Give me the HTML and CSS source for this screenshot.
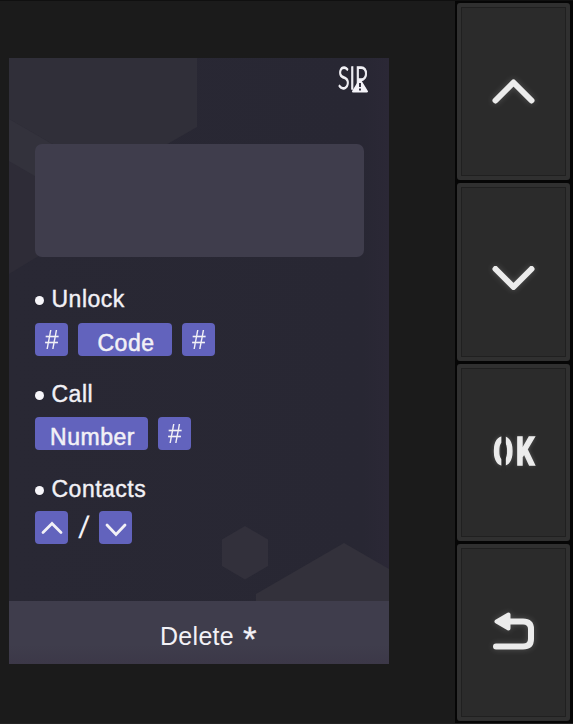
FILE: index.html
```
<!DOCTYPE html>
<html lang="en">
<head>
  <meta charset="UTF-8">
  <title>Door Station</title>
  <meta name="viewport" content="width=device-width, initial-scale=1.0">
  <link rel="stylesheet" href="styles.css">
</head>
<body>
  <div class="device">
    <div class="panel">
      <div class="screen">
        <!-- background hexagons -->
        <svg class="backdrop" viewBox="0 0 380 606" aria-hidden="true">
          <path fill="#2e2c37" d="M0 61 L80 70 L100 150 L28 199 L0 216Z"/>
          <path fill="#302f39" d="M0 0H188V69L101 119L0 61Z"/>
          <path fill="#33323c" d="M0 61L50 90V132L0 103Z"/>
          <path fill="#32303b" d="M236 468L259 481.500V508L236 521.500L213 508V481.500Z"/>
          <path fill="#33313b" d="M335 485L380 511V544H247V536Z"/>
        </svg>
        <div class="status-bar">
          <span class="sip">SIP</span>
          <svg class="warning" viewBox="0 0 18 15">
            <path fill="#f4f3f8" stroke="#f4f3f8" stroke-width="2" stroke-linejoin="round" d="M9 2L16 13.500H2Z"/>
            <path stroke="#343240" stroke-width="2" d="M9 5V9M9 10.500V12.500"/>
          </svg>
        </div>
        <div class="display"></div>
        <div class="help">
          <div class="title">Unlock</div>
          <div class="keys">
            <span class="key hash"><span>#</span></span>
            <span class="key code">Code</span>
            <span class="key hash"><span>#</span></span>
          </div>
          <div class="title">Call</div>
          <div class="keys">
            <span class="key number">Number</span>
            <span class="key hash"><span>#</span></span>
          </div>
          <div class="title">Contacts</div>
          <div class="keys">
            <span class="key"><svg viewBox="0 0 32 32"><path d="M7 20.500L16 11.500L25 20.500"/></svg></span>
            <span class="slash">/</span>
            <span class="key"><svg viewBox="0 0 32 32"><path d="M7 13L16 22.500L25 13"/></svg></span>
          </div>
        </div>
        <div class="footer"><span>Delete</span><span class="star">*</span></div>
      </div>
    </div>
    <div class="buttons">
      <button class="button" aria-label="Up">
        <svg viewBox="0 0 50 50"><path d="M6.500 33.500L24.500 15.500L42.500 33.500"/></svg>
      </button>
      <button class="button" aria-label="Down">
        <svg viewBox="0 0 50 50"><path d="M6.500 22L24.500 40L42.500 22"/></svg>
      </button>
      <button class="button">
        <span class="ok"><span class="ok-o">O</span><span>K</span></span>
      </button>
      <button class="button" aria-label="Back">
        <svg viewBox="0 0 50 50">
          <path d="M18 14.500H34Q42 14.500 42 22V32Q42 39.500 34 39.500H7"/>
          <path class="head" d="M7.500 14.500L19.500 7.500V21.500Z"/>
        </svg>
      </button>
    </div>
  </div>
</body>
</html>
```

FILE: styles.css
```
* {
  box-sizing: border-box;
}
body {
  margin: 0;
  background: #1b1b1b;
  font-family: "Liberation Sans", Arial, sans-serif;
}
.device {
  display: flex;
  width: 573px;
  height: 724px;
  overflow: hidden;
  border-top: 1px solid #101010;
  border-bottom: 1px solid #222;
}
.panel {
  width: 455px;
  padding: 57px 0 0 9px;
}

/* screen */
.screen {
  position: relative;
  display: flex;
  flex-direction: column;
  width: 380px;
  height: 606px;
  background: linear-gradient(90deg, #292834, #282733 93%, #2b2836);
  color: #f2f1f6;
}
.backdrop {
  position: absolute;
  inset: 0;
  width: 380px;
  height: 606px;
}
.status-bar {
  position: relative;
  height: 86px;
}
.sip {
  position: absolute;
  top: 1px;
  left: 329px;
  font-family: Lato, sans-serif;
  font-size: 32px;
  font-weight: 300;
  line-height: 36px;
  letter-spacing: 0;
  transform: scaleX(.67);
  transform-origin: left;
  -webkit-text-stroke: 1.3px #f2f1f6;
}
.warning {
  position: absolute;
  top: 20px;
  left: 342px;
  width: 18px;
  height: 15px;
}
.display {
  position: relative;
  height: 113px;
  margin: 0 25px 0 26px;
  border-radius: 7px;
  background: #3f3d4c;
}
.help {
  position: relative;
  display: grid;
  grid-template-rows: 39px 56px 38px 57px 37px 32px;
  padding: 27px 26px 0;
}
.title {
  display: flex;
  align-items: center;
  height: 31px;
  font-size: 23px;
  letter-spacing: .5px;
  -webkit-text-stroke: .4px #f2f1f6;
}
.title::before {
  content: "";
  width: 9px;
  height: 9px;
  margin: 2px 7.5px 0 0;
  border-radius: 50%;
  background: #f7f6fa;
}
.keys {
  display: flex;
  gap: 11px;
  height: 32px;
}
.key {
  display: flex;
  align-items: center;
  justify-content: center;
  width: 33px;
  height: 33px;
  border-radius: 4px;
  background: #6263bd;
  font-size: 23px;
  line-height: 32px;
}
.keys .key + .key,
.slash + .key {
  margin-left: -1px;
}
.key svg {
  width: 32px;
  height: 32px;
  fill: none;
  stroke: #f2f1f6;
  stroke-width: 2.8;
  stroke-linecap: round;
}
.hash {
  font-size: 28px;
}
.hash span {
  transform: scaleX(.88);
}
.keys .code,
.number {
  padding: 7px 0 0 2px;
  letter-spacing: .5px;
  -webkit-text-stroke: .5px #f2f1f6;
}
.keys .code {
  width: 94px;
}
.number {
  width: 113px;
}
.slash {
  width: 10px;
  font-size: 31px;
  line-height: 33px;
  text-align: center;
  transform: skewX(-7deg);
}
.footer {
  position: relative;
  display: flex;
  align-items: center;
  justify-content: center;
  gap: 9px;
  height: 63px;
  margin-top: auto;
  padding: 8px 0 0 19px;
  background: linear-gradient(#3f3d4c 70%, #3c3848);
  font-size: 25px;
  letter-spacing: .3px;
}
.star {
  padding-top: 4px;
  font-size: 35px;
  line-height: 24px;
  -webkit-text-stroke: .3px #f2f1f6;
}

/* hardware buttons */
.buttons {
  display: flex;
  flex-direction: column;
  gap: 3px;
  width: 118px;
  padding: 2px 3px 2px 2px;
  background: #060606;
}
.button {
  position: relative;
  display: flex;
  align-items: center;
  justify-content: center;
  flex: 1;
  padding: 0;
  border: 4px solid #303030;
  border-radius: 3px;
  background: #2b2b2b;
  box-shadow: inset 0 0 0 1px #202020;
}
.button svg {
  width: 50px;
  height: 50px;
  fill: none;
  stroke: #ececec;
  stroke-width: 6;
  stroke-linecap: round;
  stroke-linejoin: round;
  filter: drop-shadow(0 0 3px rgba(255, 255, 255, .2));
}
.button .head {
  fill: #ececec;
  stroke-width: 4;
}
.ok {
  display: flex;
  gap: 4px;
  color: #ececec;
  font-family: Roboto, sans-serif;
  font-size: 39px;
  font-weight: bold;
  line-height: 40px;
  transform: scaleX(.74);
  -webkit-text-stroke: 1.6px #ececec;
  text-shadow: 0 0 6px rgba(255, 255, 255, .3);
}
.ok-o {
  position: relative;
}
/* stencil cut through the letter */
.ok-o::after {
  content: "";
  position: absolute;
  top: 0;
  left: 10.5px;
  width: 6px;
  height: 40px;
  background: #2b2b2b;
}
```
